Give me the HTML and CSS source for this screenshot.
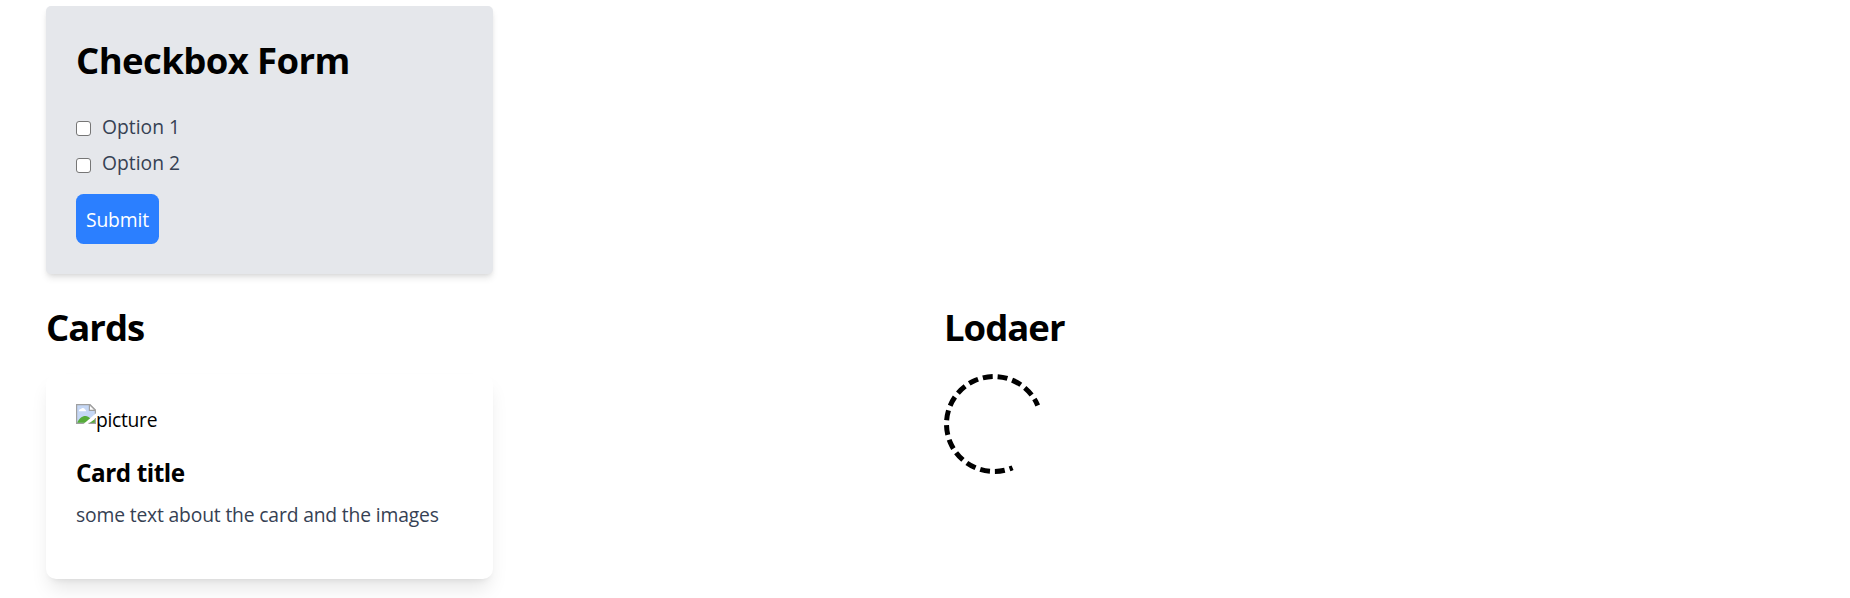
FILE: index.html
```html
<!DOCTYPE html>
<html lang="en">
<head>
<meta charset="utf-8">
<title>Components</title>
<link rel="stylesheet" href="styles.css">
</head>
<body>
<main class="page">
  <form class="form-card">
    <h1 class="heading">Checkbox Form</h1>
    <label class="option"><input class="check" type="checkbox"><span>Option 1</span></label>
    <label class="option"><input class="check" type="checkbox"><span>Option 2</span></label>
    <button class="submit" type="button">Submit</button>
  </form>
  <div class="columns">
    <section>
      <h2 class="heading section-heading">Cards</h2>
      <article class="card">
        <div class="picture">
          <svg class="broken" width="20" height="20" viewBox="0 0 20 20" aria-hidden="true">
            <path d="M.6.6H14L19.400 6V19.400H.6Z" fill="#c5d7f5" stroke="#a0a0a0" stroke-width="1.200"/>
            <path d="M3 7.200a1.800 1.800 0 0 1 2-2.200a2.200 2.200 0 0 1 4 .6a1.400 1.400 0 0 1 1 1.600Z" fill="#fff"/>
            <path d="M1.200 18.800C3 14 7 11.500 10 12c3 .4 5 3 7.500 6.800Z" fill="#56ab39"/>
            <path d="M13.400.6V6.400H19.400Z" fill="#fff" stroke="#a0a0a0" stroke-width="1.200"/>
            <path d="M7.500 20 20 9.200V14.800L13 20Z" fill="#fff"/>
            <path d="M13.500 19 19 15v4Z" fill="#56ab39"/>
            <path d="M12.500 19.400H19.400V14" fill="none" stroke="#a0a0a0" stroke-width="1.200"/>
          </svg><span class="alt">picture</span>
        </div>
        <h3 class="card-title">Card title</h3>
        <p class="card-text">some text about the card and the images</p>
      </article>
    </section>
    <section>
      <h2 class="heading section-heading">Lodaer</h2>
      <svg class="loader" width="100" height="100" viewBox="0 0 100 100" aria-label="Loading">
        <path d="M83.590 83.590A47.500 47.500 0 1 1 83.590 16.410" pathLength="270" transform="rotate(22 50 50)" fill="none" stroke="#000" stroke-width="5" stroke-dasharray="12 5.950" stroke-dashoffset="8"/>
      </svg>
    </section>
  </div>
</main>
</body>
</html>
```
FILE: styles.css
```css
* { box-sizing: border-box; margin: 0; padding: 0; }
body {
  background: #fff;
  color: #000;
  font: 19.300px/30px "Segoe UI", "Open Sans", "Noto Sans", sans-serif;
}
.page { height: 598px; padding: 6px 46px 0; overflow: hidden; }
.form-card {
  width: 447px;
  height: 268px;
  padding: 30px;
  background: #e5e7eb;
  border-radius: 5px;
  box-shadow: 0 5px 7.500px -1px rgba(0,0,0,.1), 0 2.500px 5px -2.500px rgba(0,0,0,.1);
}
.heading { font-size: 36.500px; line-height: 45px; font-weight: 700; letter-spacing: -.600px; white-space: nowrap; }
.form-card .heading { margin-bottom: 29px; margin-top: 2px; }
.option { display: flex; align-items: center; height: 30px; margin-top: 6px; color: #364153; letter-spacing: 0; }
.form-card .heading + .option { margin-top: 0; }
.check {
  appearance: none;
  width: 15px;
  height: 15px;
  margin: 3px 11px 0 0;
  background: #fff;
  border: 1px solid #767676;
  border-radius: 3px;
}
.option + .option .check { margin-top: 5px; }
.submit {
  display: block;
  width: 83px;
  height: 50px;
  margin-top: 16px;
  padding-top: 2px;
  border: 0;
  border-radius: 7.500px;
  background: #2b7fff;
  color: #fff;
  font: inherit;
  letter-spacing: -.1px;
}
.columns { display: grid; grid-template-columns: 860px 1fr; column-gap: 38px; margin-top: 31px; }
.section-heading { margin-bottom: 24px; letter-spacing: -1px; }
.card {
  width: 447px;
  height: 205px;
  padding: 30px;
  background: #fff;
  border-radius: 10px;
  box-shadow: 0 12.500px 19px -4px rgba(0,0,0,.1), 0 5px 7.500px -5px rgba(0,0,0,.1);
}
.picture { display: flex; height: 34px; }
.broken { flex: none; }
.alt { padding-top: 1px; letter-spacing: -.3px; }
.card-title { margin-top: 17px; font-size: 24.300px; line-height: 35px; font-weight: 700; letter-spacing: -.45px; }
.card-text { margin-top: 10px; color: #364153; letter-spacing: -.160px; white-space: nowrap; }
.loader { display: block; }
```
